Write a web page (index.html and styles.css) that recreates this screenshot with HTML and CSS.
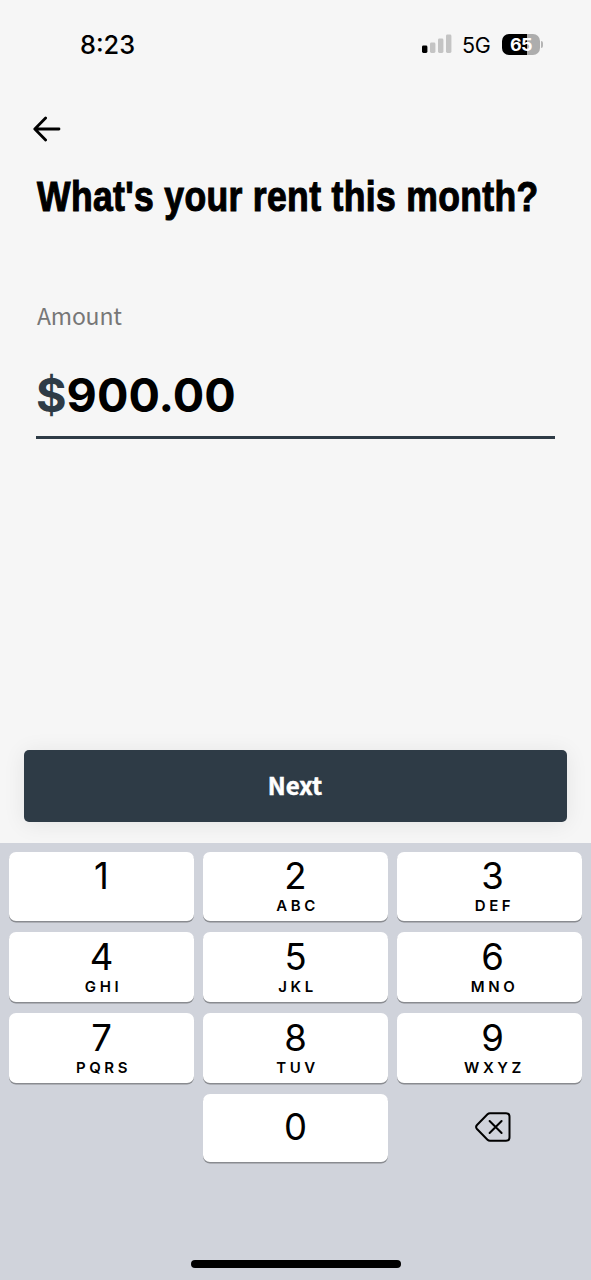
FILE: index.html
```html
<!DOCTYPE html>
<html lang="en">
<head>
<meta charset="utf-8">
<meta name="viewport" content="width=device-width, initial-scale=1">
<title>Rent amount</title>
<link rel="stylesheet" href="styles.css">
</head>
<body>
<div class="screen">

  <header class="status">
    <span class="time">8:23</span>
    <svg class="signal" width="30" height="20" viewBox="0 0 30 20">
      <rect x="0" y="11.5" width="5.4" height="7.5" rx="1.4" fill="#000"/>
      <rect x="8" y="8.5" width="5.4" height="10.5" rx="1.4" fill="#c4c4c4"/>
      <rect x="16" y="4.5" width="5.4" height="14.5" rx="1.4" fill="#c4c4c4"/>
      <rect x="24" y="0.5" width="5.4" height="18.5" rx="1.4" fill="#c4c4c4"/>
    </svg>
    <span class="network">5G</span>
    <div class="battery"><span>65</span></div>
    <span class="battery-tip"></span>
  </header>

  <main class="content">
    <a class="back" href="#" aria-label="Back">
      <svg width="28" height="26" viewBox="0 0 28 26" fill="none" stroke="#000" stroke-width="2.8" stroke-linecap="round" stroke-linejoin="round">
        <path d="M12.6 2 L1.8 13 L12.6 24 M2 13 H26"/>
      </svg>
    </a>
    <h1 class="title">What's your rent this month?</h1>
    <div class="label">Amount</div>
    <div class="amount"><span class="currency">$</span><span>900.00</span></div>
    <button class="next">Next</button>
  </main>

  <section class="keypad">
    <div class="keys">
      <div class="key"><b>1</b></div>
      <div class="key"><b>2</b><small>ABC</small></div>
      <div class="key right"><b>3</b><small>DEF</small></div>
      <div class="key low"><b>4</b><small>GHI</small></div>
      <div class="key low"><b>5</b><small>JKL</small></div>
      <div class="key low right"><b>6</b><small>MNO</small></div>
      <div class="key low"><b>7</b><small>PQRS</small></div>
      <div class="key low"><b>8</b><small>TUV</small></div>
      <div class="key low right"><b>9</b><small>WXYZ</small></div>
      <div></div>
      <div class="key zero"><b>0</b></div>
      <div class="delete">
        <svg width="36" height="30" viewBox="0 0 36 30" fill="none" stroke="#000" stroke-width="2" stroke-linecap="round" stroke-linejoin="round">
          <path d="M15 1.2 H31 Q34.5 1.2 34.5 4.7 V25.3 Q34.5 28.8 31 28.8 H15 Q13.6 28.8 12.5 27.7 L2 17 Q0.2 15 2 13 L12.5 2.3 Q13.6 1.2 15 1.2 Z"/>
          <path d="M14.6 9 L26.6 21 M26.6 9 L14.6 21"/>
        </svg>
      </div>
    </div>
    <div class="home"></div>
  </section>

</div>
</body>
</html>
```

FILE: styles.css
```css
* {
  box-sizing: border-box;
}

body {
  margin: 0;
  background: #f6f6f6;
  color: #000;
  font-family: Inter, "Liberation Sans", sans-serif;
}

.screen {
  display: flex;
  flex-direction: column;
  height: 1280px;
  overflow: hidden;
}

/* status bar */
.status {
  display: flex;
  align-items: center;
  height: 88px;
  padding-left: 80px;
}

.time {
  width: 342px;
  padding-top: 1px;
  font-size: 25.3px;
  font-weight: 500;
}

.network {
  width: 40px;
  margin-left: 10px;
  padding-top: 1px;
  font-size: 21.5px;
  letter-spacing: -0.4px;
}

.battery {
  width: 38px;
  height: 21px;
  border-radius: 7px;
  background: linear-gradient(90deg, #000 65%, #adadad 65%);
  color: #fff;
  font-size: 18px;
  font-weight: 700;
  letter-spacing: -0.5px;
  line-height: 21px;
  text-align: center;
}

.battery-tip {
  width: 2px;
  height: 7px;
  margin-left: 1px;
  border-radius: 0 2px 2px 0;
  background: #b5b5b5;
}

/* form */
.content {
  display: flex;
  flex-direction: column;
  height: 755px;
  padding: 28px 24px 21px;
}

.back {
  height: 26px;
  padding-left: 9px;
}

.back svg {
  display: block;
}

/* condensed by scaling, there is no narrow face to rely on */
.title {
  width: max-content;
  margin: 30px 0 0 13px;
  font-family: "Liberation Sans", sans-serif;
  font-size: 42px;
  font-weight: 700;
  letter-spacing: 0.4px;
  line-height: 50px;
  white-space: nowrap;
  transform: scaleX(0.846);
  transform-origin: 0 0;
  -webkit-text-stroke: 1.1px #000;
}

.label {
  margin: 78px 0 0 13px;
  color: #777;
  font-family: "Noto Sans CJK SC", "Noto Sans", sans-serif;
  font-size: 23px;
  letter-spacing: -0.2px;
  line-height: 30px;
}

.amount {
  display: flex;
  height: 87px;
  margin: 22px 12px 0;
  border-bottom: 3px solid #2e3b46;
  font-size: 46.7px;
  font-weight: 700;
  line-height: 86px;
}

.currency {
  color: #2e3b46;
}

.next {
  height: 72px;
  margin-top: auto;
  padding: 0 7px 4px 6px;
  border: 0;
  border-radius: 5px;
  background: #2e3b46;
  box-shadow: 0 2px 22px rgba(0, 0, 0, 0.08);
  color: #fff;
  font-family: "Noto Sans CJK SC", "Noto Sans", sans-serif;
  font-size: 24px;
  font-weight: 700;
  -webkit-text-stroke: 0.5px #fff;
}

/* number pad */
.keypad {
  display: flex;
  flex: 1;
  flex-direction: column;
  justify-content: space-between;
  padding: 9px 9px 12px;
  background: #d0d3db;
}

.keys {
  display: grid;
  grid-template-columns: repeat(3, 1fr);
  grid-template-rows: 69px 70px 70px 68px;
  gap: 11px 9px;
}

.key {
  display: flex;
  flex-direction: column;
  align-items: center;
  padding-top: 4px;
  border-radius: 7px;
  background: #fff;
  box-shadow: 0 1.5px 0 #898b90;
}

.key.low {
  padding-top: 5px;
}

.key.right {
  padding-left: 6px;
}

.key b {
  font-size: 36.5px;
  font-weight: 400;
  line-height: 40px;
}

.key small {
  margin-right: -4px;
  font-size: 15px;
  font-weight: 600;
  letter-spacing: 3.6px;
  line-height: 20px;
}

.key.zero {
  justify-content: center;
  padding: 0 0 2px;
}

.delete {
  display: flex;
  align-items: center;
  justify-content: center;
  padding: 0 0 3px 7px;
}

.home {
  width: 210px;
  height: 8px;
  margin: 0 auto;
  border-radius: 4px;
  background: #000;
}
```
